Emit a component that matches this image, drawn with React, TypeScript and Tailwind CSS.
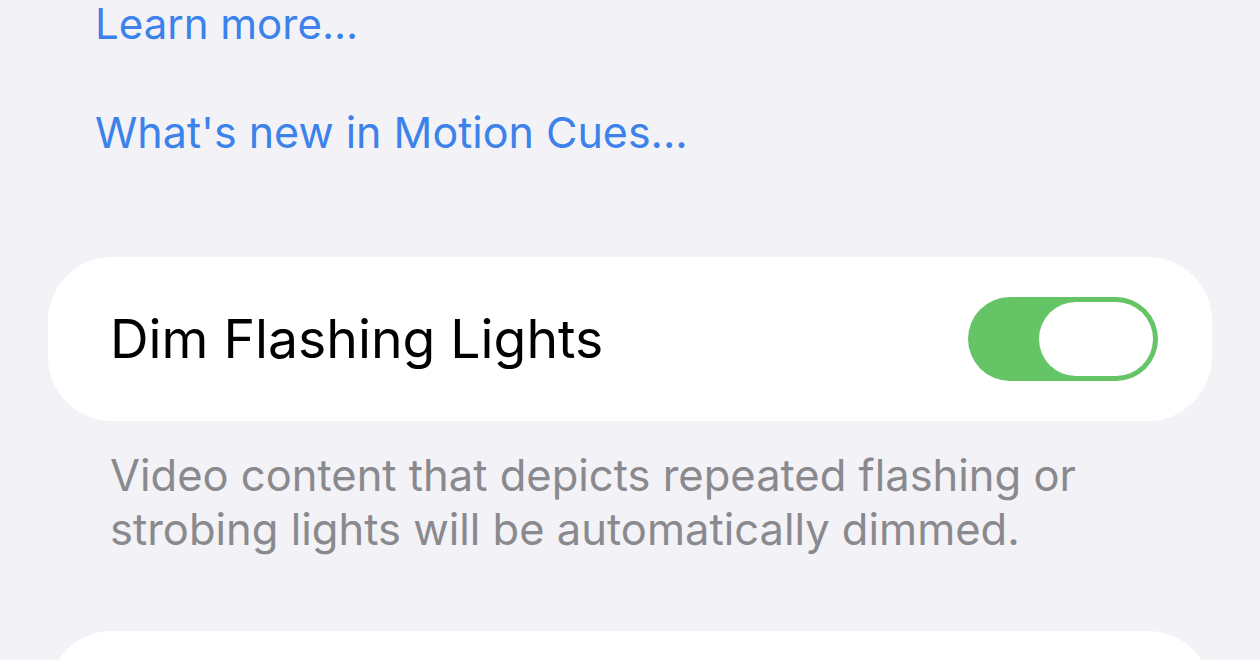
import React from "react";

const font = { fontFamily: "Inter, 'Noto Sans', sans-serif" };

function Toggle({ on }: { on: boolean }) {
  return (
    <div
      className={`relative h-[84px] w-[190px] shrink-0 rounded-full ${
        on ? "bg-[#65c466]" : "bg-[#e9e9ea]"
      }`}
    >
      <div className="absolute right-[5px] top-[5px] h-[74px] w-[114px] rounded-full bg-white" />
    </div>
  );
}

export default function App() {
  return (
    <div
      className="h-[660px] w-[1260px] overflow-hidden bg-[#f2f2f7] antialiased"
      style={font}
    >
      {/* footer links of the previous group */}
      <div className="-mt-[3px] pl-[95px] text-[43px] leading-[54px] text-[#3c82ea]">
        <div className="text-[42px]">Learn more...</div>
        <div className="mt-[54px]">What's new in Motion Cues...</div>
      </div>

      {/* Dim Flashing Lights group */}
      <div className="mx-[48px] mt-[98px] flex h-[164px] items-center justify-between rounded-[64px] bg-white pl-[62px] pr-[54px]">
        <span className="text-[53.5px] text-black">Dim Flashing Lights</span>
        <Toggle on />
      </div>
      <p className="mt-[27px] px-[110px] text-[43.5px] leading-[54px] text-[#8a8a8e]">
        Video content that depicts repeated flashing or strobing lights will be
        automatically dimmed.
      </p>

      {/* next group, cut off below */}
      <div className="mx-[48px] mt-[75px] h-[164px] rounded-[64px] bg-white" />
    </div>
  );
}
